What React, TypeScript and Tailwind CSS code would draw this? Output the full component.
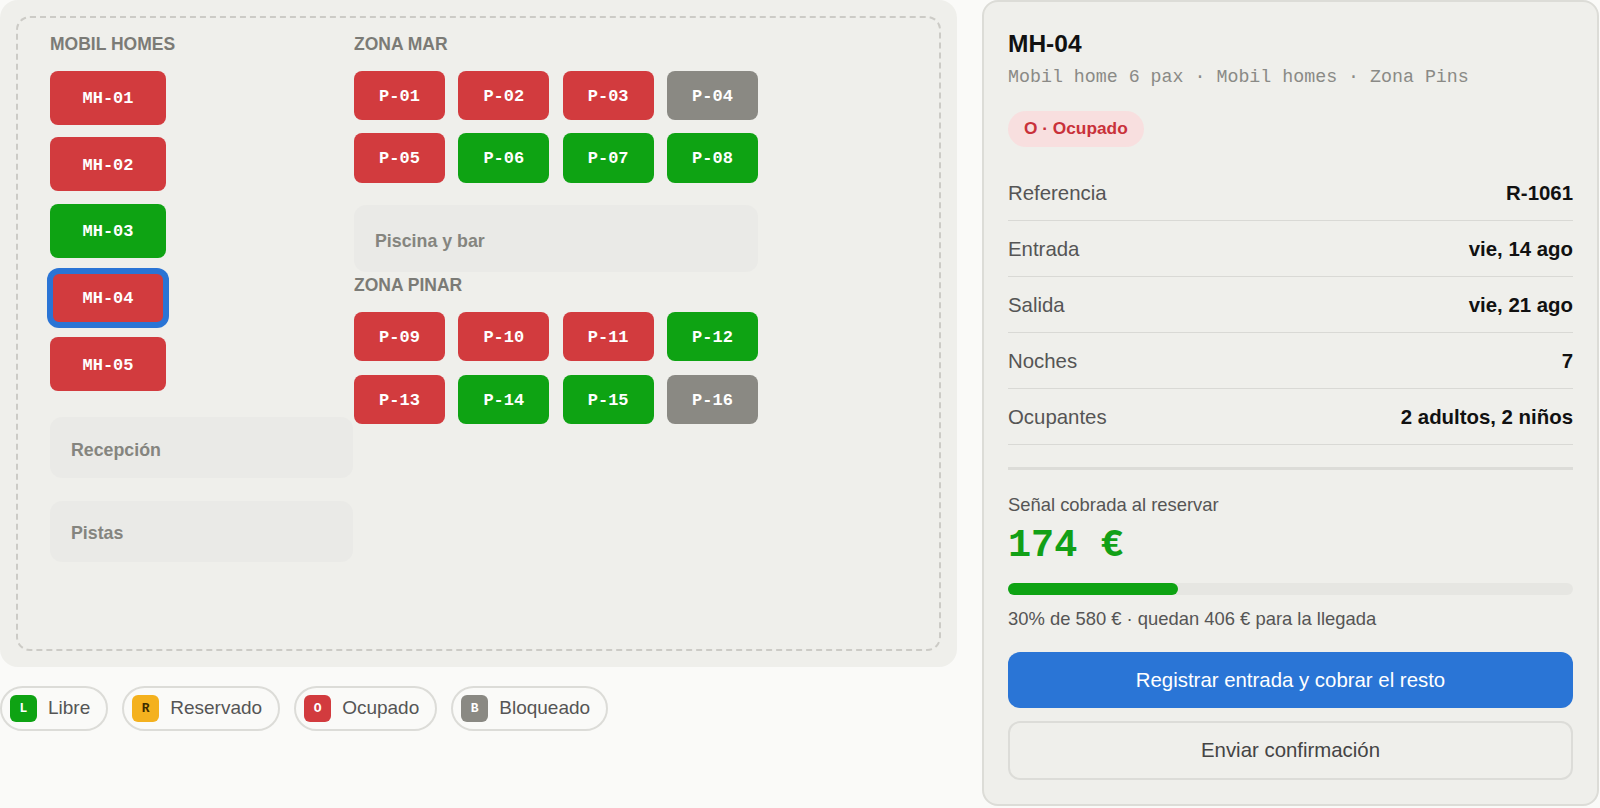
import type { ReactNode } from 'react';

type Status = 'L' | 'R' | 'O' | 'B';

interface Plot {
  id: string;
  status: Status;
}

const statusBg: Record<Status, string> = {
  L: 'bg-[#0ea313]',
  R: 'bg-[#f4b11e]',
  O: 'bg-[#d23b3e]',
  B: 'bg-[#8a8983]',
};

const mobilHomes: Plot[] = [
  { id: 'MH-01', status: 'O' },
  { id: 'MH-02', status: 'O' },
  { id: 'MH-03', status: 'L' },
  { id: 'MH-04', status: 'O' },
  { id: 'MH-05', status: 'O' },
];

const zonaMar: Plot[] = [
  { id: 'P-01', status: 'O' },
  { id: 'P-02', status: 'O' },
  { id: 'P-03', status: 'O' },
  { id: 'P-04', status: 'B' },
  { id: 'P-05', status: 'O' },
  { id: 'P-06', status: 'L' },
  { id: 'P-07', status: 'L' },
  { id: 'P-08', status: 'L' },
];

const zonaPinar: Plot[] = [
  { id: 'P-09', status: 'O' },
  { id: 'P-10', status: 'O' },
  { id: 'P-11', status: 'O' },
  { id: 'P-12', status: 'L' },
  { id: 'P-13', status: 'O' },
  { id: 'P-14', status: 'L' },
  { id: 'P-15', status: 'L' },
  { id: 'P-16', status: 'B' },
];

const legend: { status: Status; label: string; letter: string }[] = [
  { status: 'L', label: 'Libre', letter: 'text-white' },
  { status: 'R', label: 'Reservado', letter: 'text-[#3d2c00]' },
  { status: 'O', label: 'Ocupado', letter: 'text-white' },
  { status: 'B', label: 'Bloqueado', letter: 'text-white' },
];

const details: [string, string][] = [
  ['Referencia', 'R-1061'],
  ['Entrada', 'vie, 14 ago'],
  ['Salida', 'vie, 21 ago'],
  ['Noches', '7'],
  ['Ocupantes', '2 adultos, 2 niños'],
];

const selectedId = 'MH-04';

function ZoneLabel({ children, className = '' }: { children: ReactNode; className?: string }) {
  return (
    <div className={`text-[17.5px] leading-[20px] font-bold uppercase text-[#7b7b76] ${className}`}>
      {children}
    </div>
  );
}

function Tile({ plot, className }: { plot: Plot; className: string }) {
  const selected = plot.id === selectedId;
  return (
    <button
      className={`${className} ${statusBg[plot.status]} flex items-center justify-center pt-[2px] font-['Liberation_Mono',monospace] text-[17px] font-bold text-white ${
        selected ? 'rounded-[9px] border-[3px] border-[#2a74d5] shadow-[0_0_0_3px_#2a74d5]' : 'rounded-[8px]'
      }`}
    >
      {plot.id}
    </button>
  );
}

function Facility({ children, className = '' }: { children: ReactNode; className?: string }) {
  return (
    <div
      className={`flex items-center rounded-[12px] bg-[#eaeae7] pl-[21px] pt-[5px] text-[17.8px] font-bold text-[#85857f] ${className}`}
    >
      {children}
    </div>
  );
}

function CampMap() {
  return (
    <div className="h-[667px] rounded-[18px] bg-[#efefeb] p-4">
      <div className="flex h-full rounded-[14px] border-2 border-dashed border-[#cccbc6] pl-[32px] pt-[15.5px]">
        <div className="flex w-[303px] flex-col">
          <ZoneLabel>Mobil homes</ZoneLabel>
          <div className="mt-[17.2px] flex flex-col gap-[12.67px]">
            {mobilHomes.map((p) => (
              <Tile key={p.id} plot={p} className="h-[54px] w-[116px]" />
            ))}
          </div>
          <Facility className="mt-[25.4px] h-[61.5px]">Recepción</Facility>
          <Facility className="mt-[22.5px] h-[61px]">Pistas</Facility>
        </div>

        <div className="ml-px flex w-[404px] flex-col">
          <ZoneLabel>Zona mar</ZoneLabel>
          <div className="mt-[17.2px] grid grid-cols-4 gap-x-[13.33px] gap-y-[13px]">
            {zonaMar.map((p) => (
              <Tile key={p.id} plot={p} className="h-[49.7px]" />
            ))}
          </div>
          <Facility className="mt-[22px] h-[66.7px]">Piscina y bar</Facility>
          <ZoneLabel className="mt-[2.8px]">Zona pinar</ZoneLabel>
          <div className="mt-[17.7px] grid grid-cols-4 gap-x-[13.33px] gap-y-[13.6px]">
            {zonaPinar.map((p) => (
              <Tile key={p.id} plot={p} className="h-[49.2px]" />
            ))}
          </div>
        </div>
      </div>
    </div>
  );
}

function Legend() {
  return (
    <div className="mt-[19px] flex gap-[14px]">
      {legend.map((item) => (
        <div
          key={item.status}
          className="flex h-[45px] items-center gap-[11px] rounded-full border-2 border-[#dcdcd8] pl-2 pr-4"
        >
          <span
            className={`grid h-[27px] w-[27px] place-items-center rounded-[6px] font-['Liberation_Mono',monospace] text-[13px] font-bold ${statusBg[item.status]} ${item.letter}`}
          >
            {item.status}
          </span>
          <span className="text-[19px] text-[#555]">{item.label}</span>
        </div>
      ))}
    </div>
  );
}

function PlotDetail() {
  return (
    <aside className="flex h-[806px] w-[617px] shrink-0 flex-col rounded-[16px] border-2 border-[#dcdcd7] bg-[#efefeb] px-6 pt-[27px]">
      <h2 className="text-[24.5px] font-bold leading-[30px] text-[#111]">MH-04</h2>
      <p className="mt-[5px] font-['Liberation_Mono',monospace] text-[18.3px] leading-[26px] text-[#8a8a86]">
        Mobil home 6 pax · Mobil homes · Zona Pins
      </p>
      <div className="mt-[21px]">
        <span className="inline-flex h-9 items-center rounded-full bg-[#f8dfdf] px-4 text-[17.3px] font-bold text-[#c9313a]">
          O · Ocupado
        </span>
      </div>

      <div className="mt-[17.7px]">
        {details.map(([label, value]) => (
          <div
            key={label}
            className="flex items-center justify-between border-b border-[#d9d9d5] pb-[13px] pt-[14px] text-[20.4px] leading-[28px]"
          >
            <span className="text-[#555]">{label}</span>
            <span className="font-bold text-[#111]">{value}</span>
          </div>
        ))}
      </div>

      <div className="mt-[22.3px] border-t-[3px] border-[#dcdcd8] pt-[23px]">
        <div className="text-[18.4px] leading-[24px] text-[#555]">Señal cobrada al reservar</div>
        <div className="mt-[7px] font-['Liberation_Mono',monospace] text-[38.5px] font-bold leading-[44px] text-[#12a016]">
          174 €
        </div>
        <div className="mt-[15.5px] h-3 rounded-full bg-[#e6e6e2]">
          <div className="h-full rounded-full bg-[#0ea313]" style={{ width: `${(174 / 580) * 100}%` }} />
        </div>
        <div className="mt-[12px] text-[18.4px] leading-[24px] text-[#555]">
          30% de 580 € · quedan 406 € para la llegada
        </div>
        <button className="mt-[20.7px] flex h-[56px] w-full items-center justify-center rounded-[12px] bg-[#2a75d6] text-[20.4px] text-white">
          Registrar entrada y cobrar el resto
        </button>
        <button className="mt-[13px] flex h-[59px] w-full items-center justify-center rounded-[12px] border-2 border-[#dcdcd8] text-[20.4px] text-[#444]">
          Enviar confirmación
        </button>
      </div>
    </aside>
  );
}

export default function App() {
  return (
    <div className="flex min-h-screen w-[1600px] gap-[25px] bg-[#fafaf8] font-['Liberation_Sans',Arial,sans-serif]">
      <div className="w-[957px] shrink-0">
        <CampMap />
        <Legend />
      </div>
      <PlotDetail />
    </div>
  );
}
